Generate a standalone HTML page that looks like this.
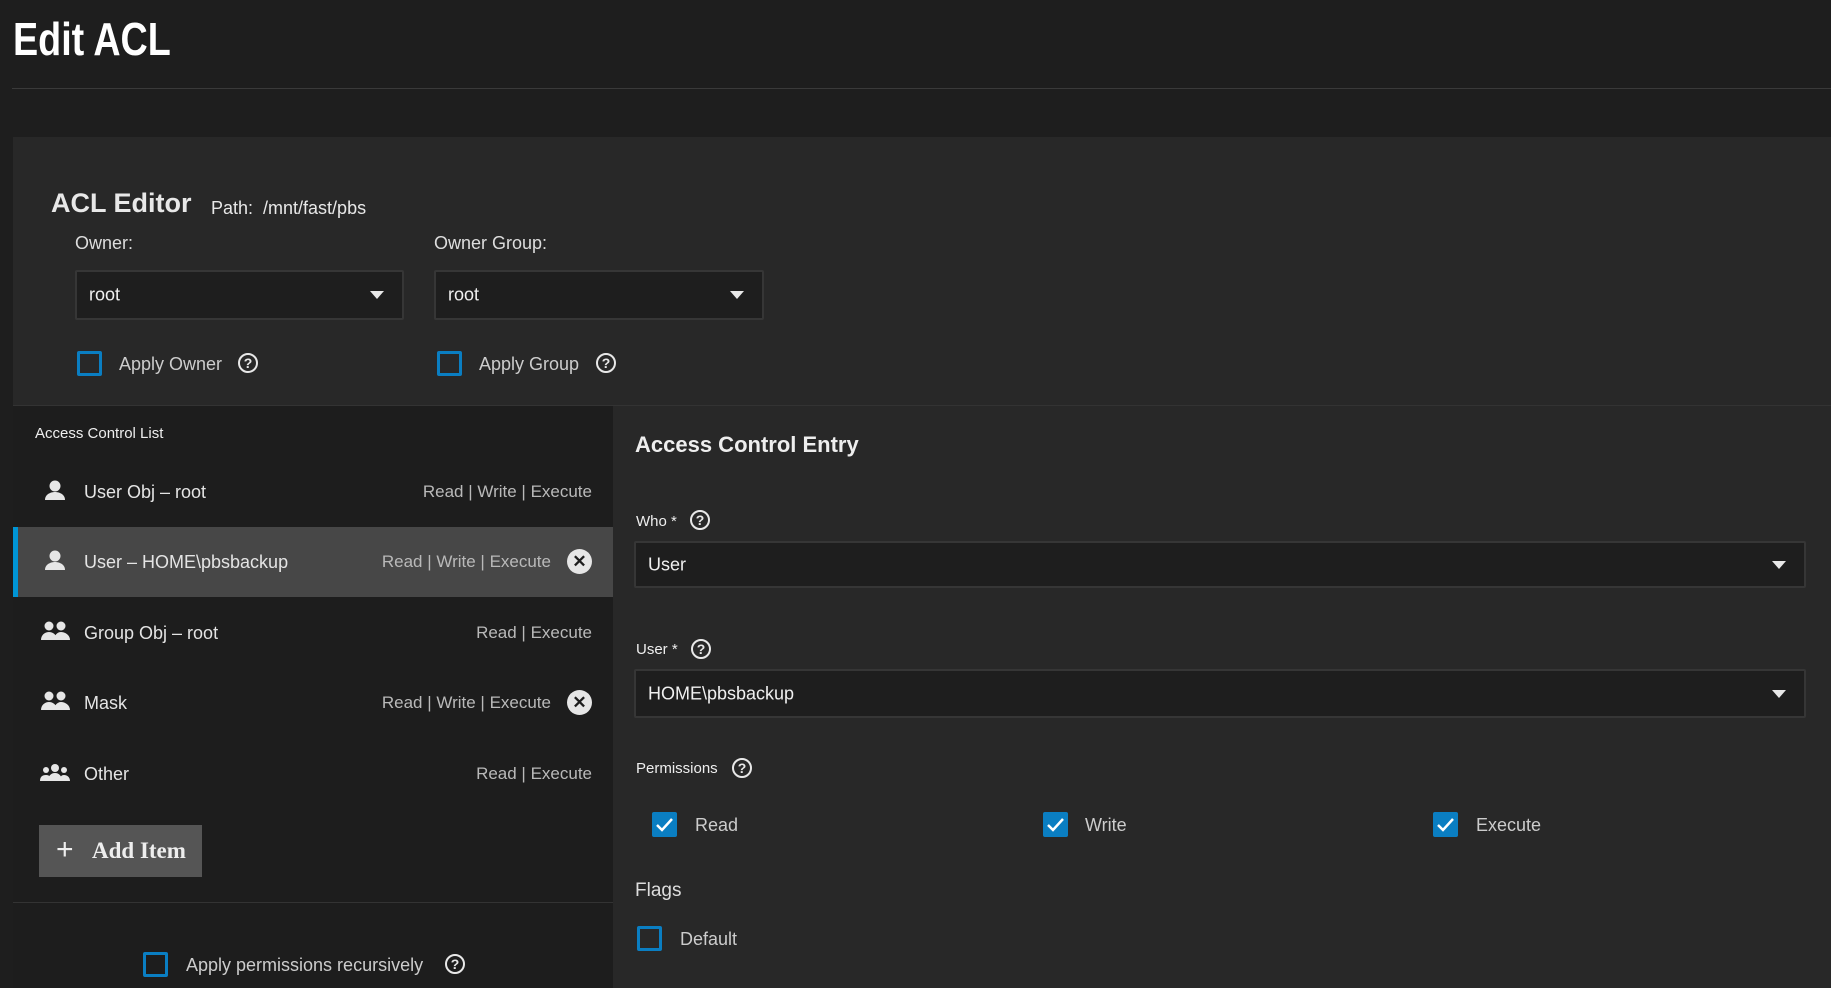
<!DOCTYPE html>
<html><head><meta charset="utf-8"><style>
*{margin:0;padding:0;box-sizing:border-box}
body{width:1831px;height:988px;background:#1e1e1e;font-family:"Liberation Sans",sans-serif;color:#e4e4e4;position:relative;overflow:hidden}
.a{position:absolute;white-space:nowrap}
.t{font-size:18px;line-height:22px}
.sel{position:absolute;background:#1e1e1e;border:2px solid #363636;border-radius:2px}
.sel span{position:absolute;left:12px;top:50%;transform:translateY(-50%);font-size:18px;color:#f0f0f0}
.arr{position:absolute;right:18px;top:50%;margin-top:-4px;width:0;height:0;border-left:7px solid transparent;border-right:7px solid transparent;border-top:8px solid #e8e8e8}
.cb{position:absolute;width:25px;height:25px;border:3px solid #0a7ec2;border-radius:2px}
.cbc{position:absolute;width:25px;height:25px;background:#0a7ec2;border-radius:2px}
.q{position:absolute;width:20px;height:20px;border:2px solid #e8e8e8;border-radius:50%;font-size:14px;font-weight:bold;text-align:center;line-height:16px;color:#e8e8e8}
.perm{position:absolute;font-size:17px;color:#b9b9b9;text-align:right}
.x{position:absolute;width:25px;height:25px;border-radius:50%;background:#e6e6e6;color:#1e1e1e;font-size:17px;font-weight:bold;text-align:center;line-height:25px}
</style></head><body>
<div class="a" style="left:13px;top:12px;font-size:46px;font-weight:bold;color:#fff;transform:scaleX(0.82);transform-origin:left;font-family:'Liberation Sans Narrow','Liberation Sans',sans-serif">Edit ACL</div>
<div class="a" style="left:12px;top:88px;width:1819px;height:1px;background:#3a3a3a"></div>
<div class="a" style="left:13px;top:137px;width:1818px;height:851px;background:#282828"></div>
<div class="a" style="left:51px;top:188px;font-size:27px;font-weight:bold;color:#e8e8e8">ACL Editor</div>
<div class="a t" style="left:211px;top:197px;color:#e8e8e8">Path:&nbsp; /mnt/fast/pbs</div>
<div class="a t" style="left:75px;top:232px;color:#ddd">Owner:</div>
<div class="a t" style="left:434px;top:232px;color:#ddd">Owner Group:</div>
<div class="sel" style="left:75px;top:270px;width:329px;height:50px"><span>root</span><div class="arr"></div></div>
<div class="sel" style="left:434px;top:270px;width:330px;height:50px"><span>root</span><div class="arr"></div></div>
<div class="cb" style="left:77px;top:351px"></div>
<div class="a t" style="left:119px;top:353px;color:#ccc">Apply Owner</div>
<div class="q" style="left:238px;top:353px">?</div>
<div class="cb" style="left:437px;top:351px"></div>
<div class="a t" style="left:479px;top:353px;color:#ccc">Apply Group</div>
<div class="q" style="left:596px;top:353px">?</div>
<div class="a" style="left:13px;top:405px;width:1818px;height:1px;background:#333"></div>
<div class="a" style="left:13px;top:406px;width:600px;height:582px;background:#1d1d1d"></div>
<div class="a" style="left:35px;top:425px;font-size:15px;color:#eee">Access Control List</div>
<div class="a" style="left:13px;top:527px;width:600px;height:70px;background:#474747;border-left:5px solid #0095d5"></div>
<svg class="a" style="left:0;top:0" width="80" height="988" fill="#e6e6e6">
<g transform="translate(44,480)"><circle cx="11" cy="6" r="5.5"/><path d="M1 20c0-6 6-8 10-8s10 2 10 8z"/></g>
<g transform="translate(44,550)"><circle cx="11" cy="6" r="5.5"/><path d="M1 20c0-6 6-8 10-8s10 2 10 8z"/></g>
<g transform="translate(41,621)"><circle cx="8" cy="5" r="4.5"/><circle cx="20" cy="5" r="4.5"/><path d="M0 19c0-5 4-8 8-8s8 3 8 8zM13 19c0-4 3-8 7-8s9 3 9 8z"/></g>
<g transform="translate(41,691)"><circle cx="8" cy="5" r="4.5"/><circle cx="20" cy="5" r="4.5"/><path d="M0 19c0-5 4-8 8-8s8 3 8 8zM13 19c0-4 3-8 7-8s9 3 9 8z"/></g>
<g transform="translate(40,764)"><circle cx="15" cy="4" r="4"/><circle cx="6" cy="6" r="3"/><circle cx="24" cy="6" r="3"/><path d="M8 17c0-5 3-8 7-8s7 3 7 8zM0 17c0-4 2-6 6-6s4 2 4 6zM20 17c0-4 1-6 4-6s6 2 6 6z"/></g>
</svg>
<div class="a t" style="left:84px;top:481px">User Obj – root</div>
<div class="perm" style="left:380px;top:482px;width:212px">Read | Write | Execute</div>
<div class="a t" style="left:84px;top:551px">User – HOME\pbsbackup</div>
<div class="perm" style="left:340px;top:552px;width:211px">Read | Write | Execute</div>
<div class="x" style="left:567px;top:549px">✕</div>
<div class="a t" style="left:84px;top:622px">Group Obj – root</div>
<div class="perm" style="left:380px;top:623px;width:212px">Read | Execute</div>
<div class="a t" style="left:84px;top:692px">Mask</div>
<div class="perm" style="left:340px;top:693px;width:211px">Read | Write | Execute</div>
<div class="x" style="left:567px;top:690px">✕</div>
<div class="a t" style="left:84px;top:763px">Other</div>
<div class="perm" style="left:380px;top:764px;width:212px">Read | Execute</div>
<div class="a" style="left:39px;top:825px;width:163px;height:52px;background:#555"></div>
<div class="a" style="left:56px;top:837px;font-size:30px;line-height:26px;color:#eee">+</div>
<div class="a" style="left:92px;top:838px;font-size:23px;font-weight:bold;font-family:'Liberation Serif',serif;color:#eee">Add Item</div>
<div class="a" style="left:13px;top:902px;width:600px;height:1px;background:#333"></div>
<div class="cb" style="left:143px;top:952px"></div>
<div class="a t" style="left:186px;top:954px;color:#ccc">Apply permissions recursively</div>
<div class="q" style="left:445px;top:954px">?</div>
<div class="a" style="left:635px;top:432px;font-size:22px;font-weight:bold;color:#eee">Access Control Entry</div>
<div class="a" style="left:636px;top:513px;font-size:15px;color:#eee">Who *</div>
<div class="q" style="left:690px;top:510px">?</div>
<div class="sel" style="left:634px;top:541px;width:1172px;height:47px"><span>User</span><div class="arr"></div></div>
<div class="a" style="left:636px;top:641px;font-size:15px;color:#eee">User *</div>
<div class="q" style="left:691px;top:639px">?</div>
<div class="sel" style="left:634px;top:669px;width:1172px;height:49px"><span>HOME\pbsbackup</span><div class="arr"></div></div>
<div class="a" style="left:636px;top:760px;font-size:15px;color:#eee">Permissions</div>
<div class="q" style="left:732px;top:758px">?</div>
<svg width="0" height="0"></svg>
<div class="cbc" style="left:652px;top:812px"><svg width="25" height="25"><path d="M5 13l5 5 10-11" stroke="#fff" stroke-width="2.5" fill="none"/></svg></div>
<div class="a t" style="left:695px;top:814px;color:#ccc">Read</div>
<div class="cbc" style="left:1043px;top:812px"><svg width="25" height="25"><path d="M5 13l5 5 10-11" stroke="#fff" stroke-width="2.5" fill="none"/></svg></div>
<div class="a t" style="left:1085px;top:814px;color:#ccc">Write</div>
<div class="cbc" style="left:1433px;top:812px"><svg width="25" height="25"><path d="M5 13l5 5 10-11" stroke="#fff" stroke-width="2.5" fill="none"/></svg></div>
<div class="a t" style="left:1476px;top:814px;color:#ccc">Execute</div>
<div class="a" style="left:635px;top:880px;font-size:19px;color:#ddd">Flags</div>
<div class="cb" style="left:637px;top:926px"></div>
<div class="a t" style="left:680px;top:928px;color:#ccc">Default</div>
</body></html>
